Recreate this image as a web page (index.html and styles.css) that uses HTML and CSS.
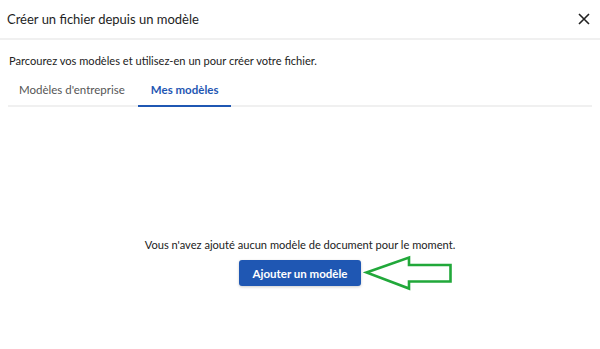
FILE: index.html
```html
<!DOCTYPE html>
<html lang="fr">
<head>
  <meta charset="UTF-8">
  <title>Créer un fichier depuis un modèle</title>
  <link rel="stylesheet" href="styles.css">
</head>
<body>
  <div class="dialog">
    <div class="header">
      <h2>Créer un fichier depuis un modèle</h2>
      <button class="close" aria-label="Fermer">
        <svg width="12" height="12" viewBox="0 0 12 12">
          <path d="M1 1 L11 11 M11 1 L1 11" stroke="#222" stroke-width="1.6" fill="none"/>
        </svg>
      </button>
    </div>
    <div class="content">
      <p class="intro">Parcourez vos modèles et utilisez-en un pour créer votre fichier.</p>
      <div class="tabs">
        <div class="tab">Modèles d'entreprise</div>
        <div class="tab active">Mes modèles</div>
      </div>
      <div class="empty">
        <p>Vous n'avez ajouté aucun modèle de document pour le moment.</p>
        <div class="action">
          <button class="add">Ajouter un modèle</button>
          <svg class="arrow" width="92" height="38" viewBox="0 0 92 38">
            <path d="M3.5 18.5 L46 3.5 L46 11 L87.5 11 L87.5 27.5 L46 27.5 L46 34.5 Z" stroke="#21a83a" stroke-width="2.6" fill="none" stroke-linejoin="miter"/>
          </svg>
        </div>
      </div>
    </div>
  </div>
</body>
</html>
```

FILE: styles.css
```css
body {
  font-family: 'Lato', sans-serif;
  background: white;
  margin: 0;
  color: #222;
}
.dialog {
  width: 600px;
  height: 349px;
}
.header {
  display: flex;
  align-items: center;
  justify-content: space-between;
  height: 38px;
  padding: 0 7px 0 7px;
  border-bottom: 2px solid #f0f0f0;
}
.header h2 {
  margin: 0;
  font-size: 13px;
  font-weight: 400;
  color: #1e1e1e;
}
.close {
  border: none;
  background: none;
  padding: 0;
  margin-right: 3px;
  width: 12px;
  height: 12px;
  cursor: pointer;
}
.content {
  padding: 0 8px 0 8px;
}
.intro {
  margin: 14px 0 0 1px;
  font-size: 11.1px;
  color: #222;
}
.tabs {
  display: flex;
  margin-top: 10px;
  border-bottom: 2px solid #f0f0f0;
}
.tab {
  padding: 6px 12px 9px 11px;
  font-size: 11.5px;
  color: #555;
}
.tab.active {
  margin-left: 1px;
  padding: 6px 13px 9px 13px;
  color: #1f57b3;
  font-weight: 700;
  border-bottom: 2px solid #1f57b3;
  margin-bottom: -2px;
}
.empty {
  display: flex;
  flex-direction: column;
  align-items: center;
  margin-top: 131px;
}
.empty p {
  margin: 0;
  font-size: 11.1px;
  color: #222;
}
.action {
  position: relative;
  margin-top: 9px;
}
.add {
  font-family: 'Lato', sans-serif;
  font-size: 11.5px;
  font-weight: 700;
  color: white;
  background: #1f57b3;
  border: none;
  border-radius: 3px;
  padding: 0 14px;
  height: 26px;
  box-shadow: 0 1px 3px rgba(0,0,0,0.2);
}
.arrow {
  position: absolute;
  left: calc(100% + 2px);
  top: -6px;
}
```
